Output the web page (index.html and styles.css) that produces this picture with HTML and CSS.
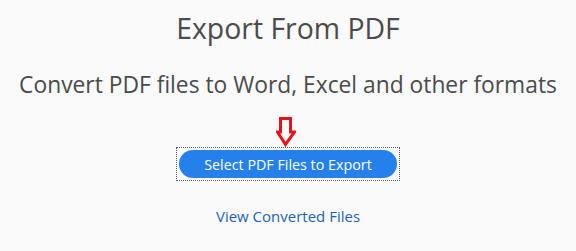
FILE: index.html
```html
<!DOCTYPE html>
<html lang="en">
<head>
  <meta charset="UTF-8">
  <title>Export From PDF</title>
  <link rel="stylesheet" href="styles.css">
</head>
<body>
  <div class="page">
    <h1>Export From PDF</h1>
    <p class="subtitle">Convert PDF files to Word, Excel and other formats</p>

    <svg class="arrow" width="20" height="30" viewBox="0 0 20 30">
      <path d="M4.5 1.5 H14.5 V15 H18.5 L9.5 27.5 L1.5 15 H4.5 Z" fill="none" stroke="#e8121b" stroke-width="3"/>
    </svg>

    <div class="focus-ring">
      <button class="select-btn">Select PDF Files to Export</button>
    </div>

    <a class="converted" href="#">View Converted Files</a>
  </div>
</body>
</html>
```

FILE: styles.css
```css
body {
  margin: 0;
  background: #fafafa;
  font-family: "Open Sans", "Noto Sans", sans-serif;
  color: #4b4b4b;
}
.page {
  display: flex;
  flex-direction: column;
  align-items: center;
  padding-top: 8px;
}
h1 {
  margin: 0;
  font-size: 28.4px;
  font-weight: 400;
  line-height: 40px;
}
.subtitle {
  margin: 22px 0 0;
  font-size: 22.8px;
  line-height: 30px;
}
.arrow {
  display: block;
  margin-top: 17px;
  margin-right: 4px;
}
.focus-ring {
  border: 1px dotted #555;
  padding: 2px;
}
.select-btn {
  display: block;
  width: 218px;
  height: 28px;
  border: none;
  border-radius: 14px;
  background: #2680eb;
  color: #fff;
  font-family: inherit;
  font-size: 14.3px;
  padding: 0;
}
.converted {
  margin-top: 25px;
  font-size: 15px;
  line-height: 20px;
  color: #1b62b6;
  text-decoration: none;
}
```
